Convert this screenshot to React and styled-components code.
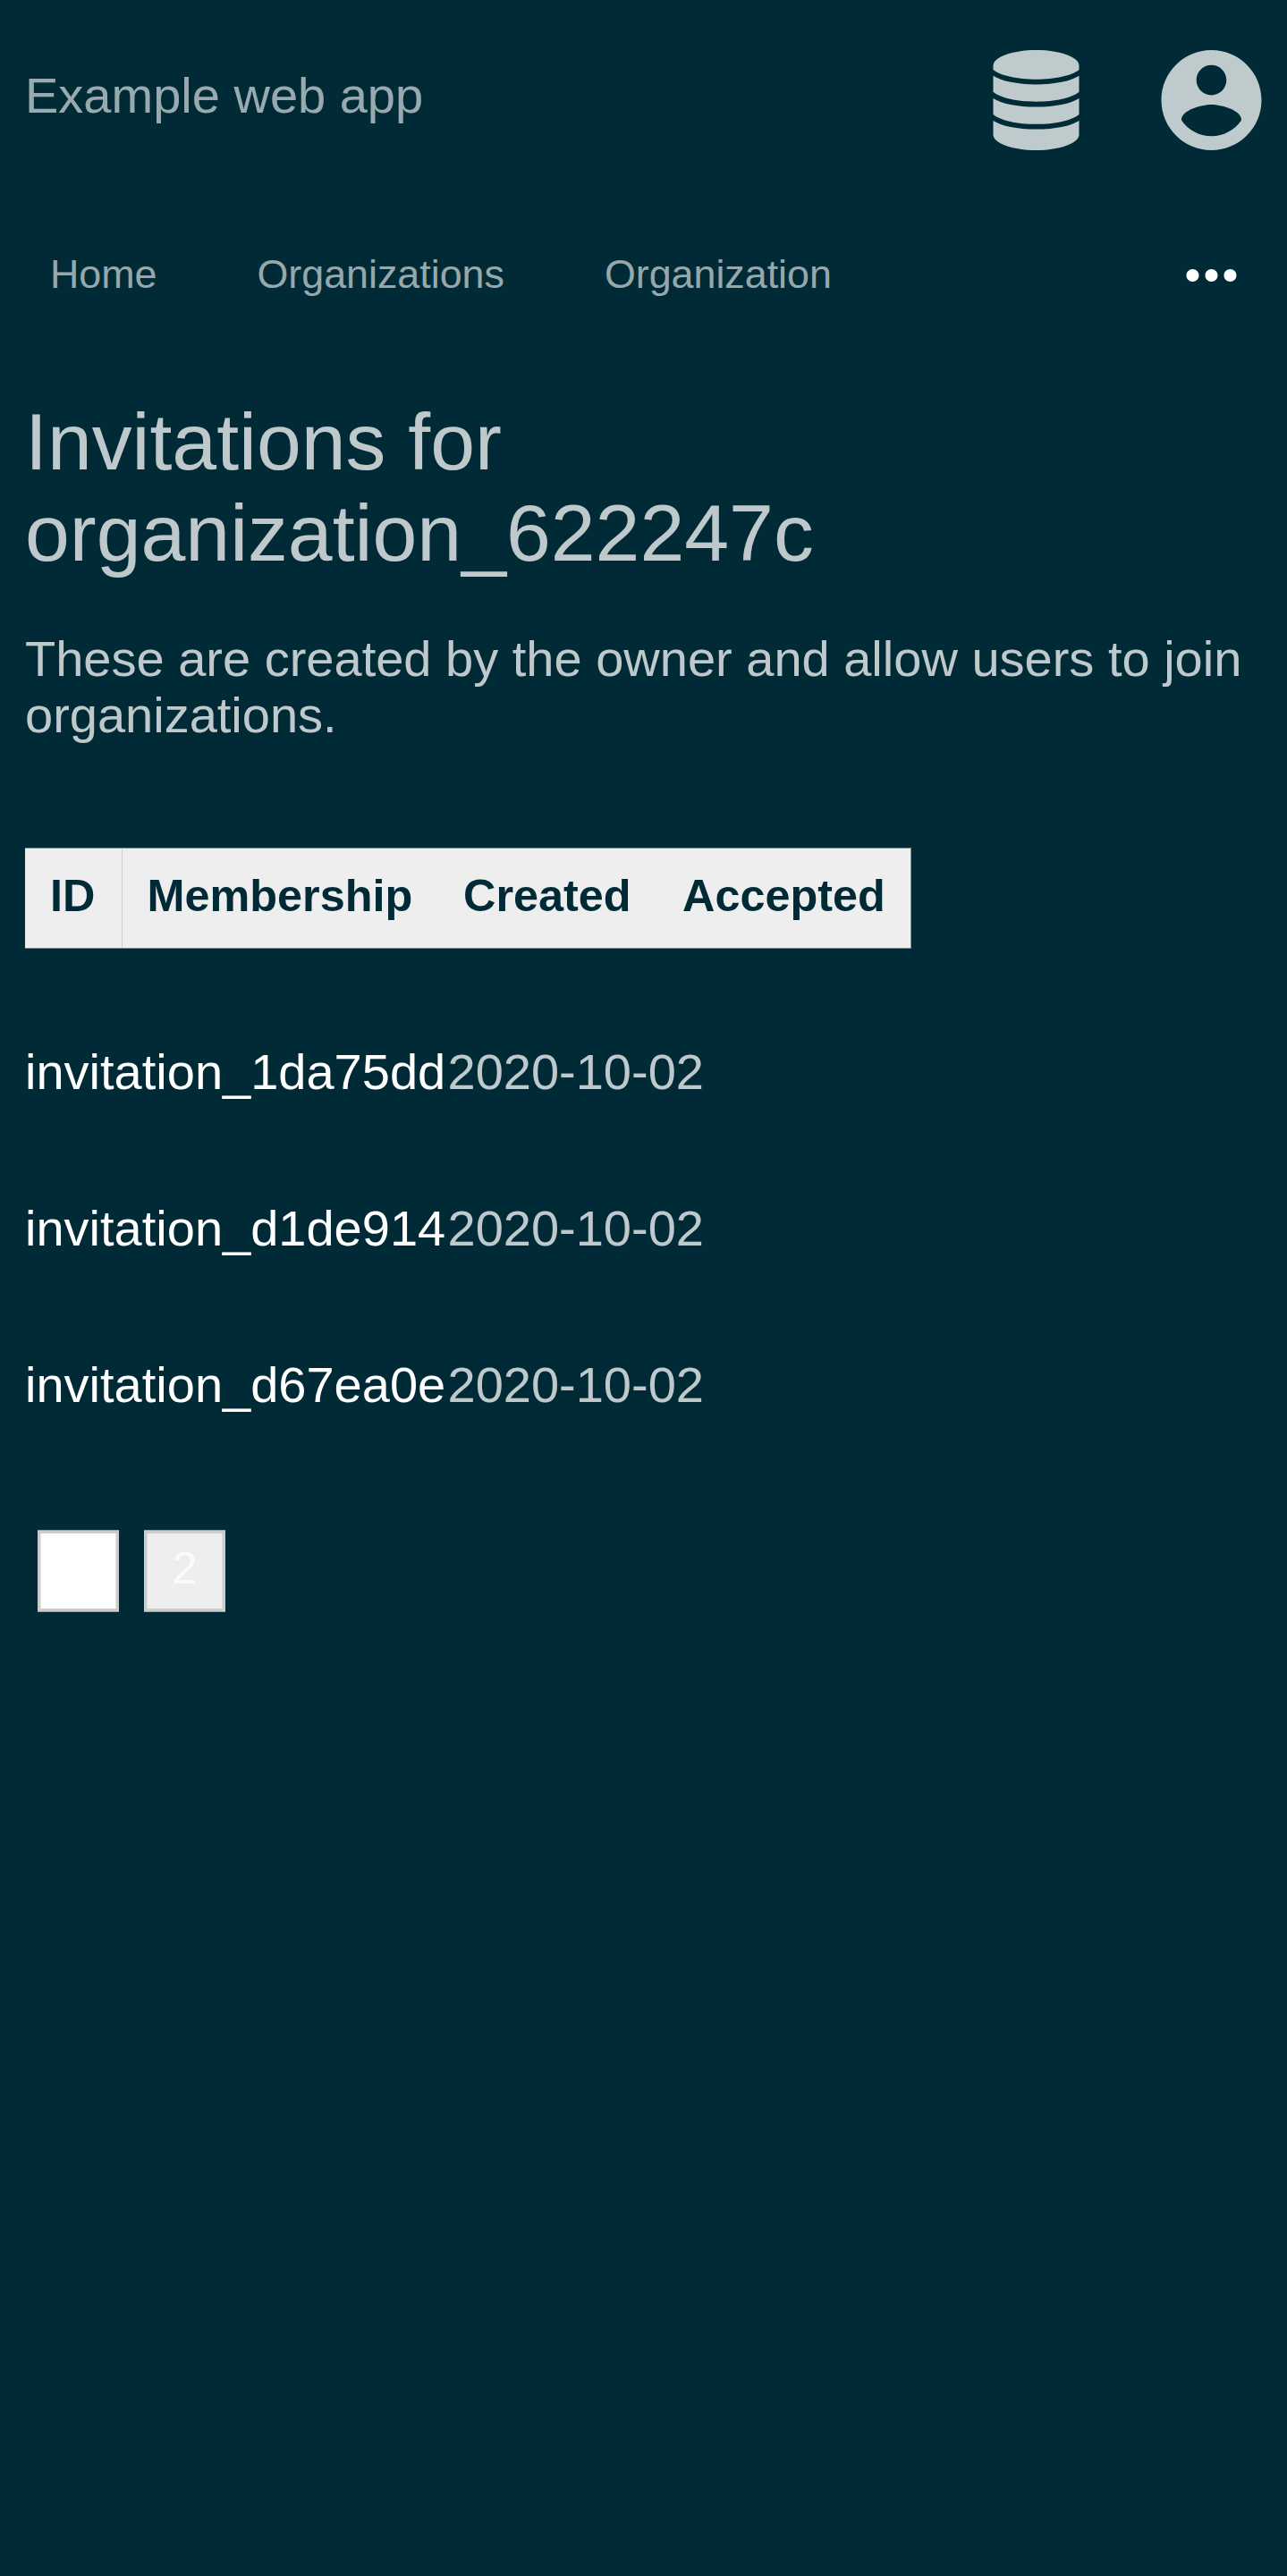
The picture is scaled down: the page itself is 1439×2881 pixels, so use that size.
import React from "react";
import styled, { createGlobalStyle } from "styled-components";

const GlobalStyle = createGlobalStyle`
  html, body {
    margin: 0;
    background: #002b36;
  }
  body {
    min-height: 2881px;
    color: rgba(255, 255, 255, 0.75);
    font-family: "Liberation Sans", Arial, sans-serif;
    font-size: 56px;
    line-height: 63px;
  }
`;

const Header = styled.header`
  display: flex;
  justify-content: space-between;
  align-items: flex-start;
  box-sizing: border-box;
  height: 224px;
  padding: 56px 28px 0;
`;

const Brand = styled.a`
  margin-top: 19px;
  color: rgba(255, 255, 255, 0.6);
`;

const Actions = styled.div`
  display: flex;
  gap: 91px;
`;

const Icon = styled.svg`
  display: block;
  width: ${(p) => p.$width}px;
  height: ${(p) => p.$height}px;
  fill: ${(p) => p.$color || "#bfcacd"};
`;

const Nav = styled.nav`
  display: flex;
  align-items: center;
  height: 168px;
  padding: 0 42px 0 56px;
`;

const NavLink = styled.a`
  margin-right: 112px;
  padding-bottom: 4px;
  color: rgba(255, 255, 255, 0.6);
  font-size: 44.8px;
  line-height: 52px;
`;

const MoreButton = styled.span`
  margin-left: auto;
`;

const Main = styled.main`
  padding: 51px 28px 0;
`;

const Title = styled.h1`
  margin: 0;
  width: 1100px;
  font-size: 89.6px;
  font-weight: 400;
  line-height: 102px;
`;

const Intro = styled.p`
  margin: 58px 0 0;
`;

const HeadRow = styled.div`
  display: grid;
  grid-template-columns: 108.5px 353.5px 245px 1fr;
  box-sizing: border-box;
  width: 991px;
  height: 113px;
  margin-top: 117px;
  background: #eee;
  border: 1px solid #778d92;
  border-left: 0;
`;

const HeadCell = styled.div`
  padding: 24px 0 0 28px;
  color: #002b36;
  font-size: 50.4px;
  font-weight: 700;
  line-height: 57px;
  box-shadow: ${(p) => (p.$divided ? "inset -1px 0 #ccd3d5" : "none")};
`;

const Rows = styled.div`
  padding-top: 50px;
`;

const Row = styled.div`
  display: grid;
  grid-template-columns: 472.5px auto;
  align-items: center;
  height: 175px;
`;

const InviteLink = styled.a`
  color: #fff;
`;

const Pager = styled.div`
  display: flex;
  gap: 28px;
  padding: 75px 14px 0;
`;

const PageLink = styled.a`
  box-sizing: border-box;
  width: 91px;
  height: 92px;
  padding-top: 14px;
  text-align: center;
  font-size: 50.4px;
  line-height: 57px;
  color: ${(p) => (p.$current ? "#fff" : "#fbfbfb")};
  background: ${(p) => (p.$current ? "#fff" : "#eee")};
  box-shadow:
    inset 0 1px #99a6a9,
    inset 0 -1px #99a6a9,
    inset 3px 0 #ccc,
    inset -3px 0 #ccc,
    inset 0 4px #ccc,
    inset 0 -4px #ccc,
    inset 4px 0 ${(p) => (p.$current ? "#e5e5e5" : "#ddd")},
    inset -4px 0 ${(p) => (p.$current ? "#e5e5e5" : "#ddd")};
`;

const columns = ["ID", "Membership", "Created", "Accepted"];

const invitations = [
  { id: "invitation_1da75dd", created: "2020-10-02" },
  { id: "invitation_d1de914", created: "2020-10-02" },
  { id: "invitation_d67ea0e", created: "2020-10-02" },
];

export default function App() {
  return (
    <>
      <GlobalStyle />
      <Header>
        <Brand>Example web app</Brand>
        <Actions>
          <Icon $width={97} $height={112} viewBox="-0.5 0 97 112">
            <path d="M0 17.500C0 8 21 0 48 0s48 8 48 17.500V22C88 28.500 69 32.800 48 32.800S8 28.500 0 22z" />
            <path d="M0 28.800C9 34.700 27 38.400 48 38.400S87 34.700 96 28.800V46.800C88 53.500 69 57.700 48 57.700S8 53.500 0 46.800z" />
            <path d="M0 53.900C9 59.800 27 63.500 48 63.500S87 59.800 96 53.900V71.900C88 78.600 69 82.800 48 82.800S8 78.600 0 71.900z" />
            <path d="M0 79C9 84.900 27 88.600 48 88.600S87 84.900 96 79V94.500C96 104 75 112 48 112S0 104 0 94.500z" />
          </Icon>
          <Icon $width={113} $height={112} viewBox="1.911 2 20.178 20">
            <path d="M12 2C6.480 2 2 6.480 2 12s4.480 10 10 10 10-4.480 10-10S17.520 2 12 2zm0 3c1.660 0 3 1.340 3 3s-1.340 3-3 3-3-1.340-3-3 1.340-3 3-3zm0 14.200c-2.500 0-4.710-1.280-6-3.220.03-1.990 4-3.080 6-3.080 1.990 0 5.970 1.090 6 3.080-1.290 1.940-3.500 3.220-6 3.220z" />
          </Icon>
        </Actions>
      </Header>
      <Nav>
        <NavLink>Home</NavLink>
        <NavLink>Organizations</NavLink>
        <NavLink>Organization</NavLink>
        <MoreButton>
          <Icon $width={85} $height={84} $color="#fff" viewBox="-0.143 0 24.286 24">
            <path d="M6 10c-1.100 0-2 .9-2 2s.9 2 2 2 2-.9 2-2-.9-2-2-2zm12 0c-1.100 0-2 .9-2 2s.9 2 2 2 2-.9 2-2-.9-2-2-2zm-6 0c-1.100 0-2 .9-2 2s.9 2 2 2 2-.9 2-2-.9-2-2-2z" />
          </Icon>
        </MoreButton>
      </Nav>
      <Main>
        <Title>Invitations for organization_622247c</Title>
        <Intro>
          These are created by the owner and allow users to join organizations.
        </Intro>
        <HeadRow>
          {columns.map((name, i) => (
            <HeadCell key={name} $divided={i === 0}>
              {name}
            </HeadCell>
          ))}
        </HeadRow>
        <Rows>
          {invitations.map((item) => (
            <Row key={item.id}>
              <InviteLink>{item.id}</InviteLink>
              <span>{item.created}</span>
            </Row>
          ))}
        </Rows>
        <Pager>
          <PageLink $current>1</PageLink>
          <PageLink>2</PageLink>
        </Pager>
      </Main>
    </>
  );
}
